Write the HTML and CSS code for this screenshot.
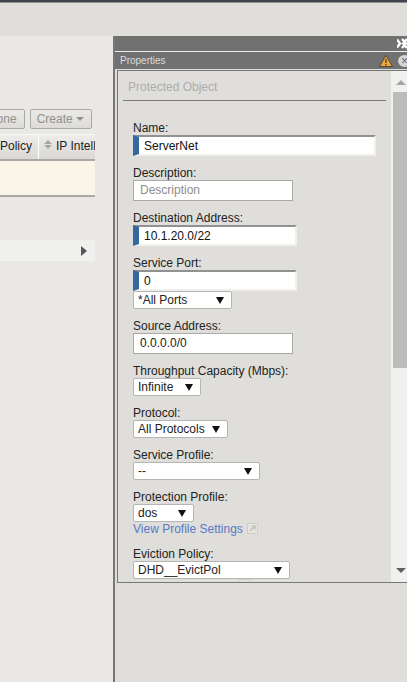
FILE: index.html
```html
<!DOCTYPE html>
<html lang="en">
<head>
  <meta charset="UTF-8">
  <title>Protected Object</title>
  <link rel="stylesheet" href="styles.css">
</head>
<body>
  <div class="topbar"></div>
  <div class="subbar"></div>

  <div class="workspace">
    <div class="list-area">
      <div class="toolbar">
        <span class="btn">Clone</span>
        <span class="btn btn-create">Create <i class="caret"></i></span>
      </div>
      <div class="table-head">
        <div class="th th-policy">Policy</div>
        <div class="th th-intel"><span class="sort"><i></i><i></i></span>IP Intelligence</div>
      </div>
      <div class="table-row"></div>
      <div class="expander"><i class="arrow"></i></div>
    </div>

    <div class="props">
      <div class="props-head">
        <div class="props-top">
          <svg class="close-all" width="10" height="11" viewBox="0 0 10 11"><path d="M0 1.5 L3 5.5 L0 9.5 M5 1 L9 5.5 L5 10 M10 1 L6 5.5 L10 10" fill="none" stroke="#fff" stroke-width="2.4"/></svg>
        </div>
        <div class="props-title">
          <span>Properties</span>
          <svg class="warn" width="14" height="12" viewBox="0 0 14 12"><path d="M7 .5 L13.5 11.5 L.5 11.5 Z" fill="#f2a838" stroke="#3a3a30" stroke-width=".8"/><path d="M7 4 V8 M7 9 V10.5" stroke="#333" stroke-width="1.2"/></svg>
          <span class="close-btn">×</span>
        </div>
      </div>

      <div class="props-box">
        <div class="form-scroll">
          <h2>Protected Object</h2>

          <div class="field">
            <label>Name:</label>
            <div class="req">ServerNet</div>
          </div>
          <div class="field">
            <label>Description:</label>
            <div class="text placeholder">Description</div>
          </div>
          <div class="field">
            <label>Destination Address:</label>
            <div class="req req-short">10.1.20.0/22</div>
          </div>
          <div class="field">
            <label>Service Port:</label>
            <div class="req req-short">0</div>
            <div class="select w-ports"><span>*All Ports</span><b></b></div>
          </div>
          <div class="field">
            <label>Source Address:</label>
            <div class="text">0.0.0.0/0</div>
          </div>
          <div class="field">
            <label>Throughput Capacity (Mbps):</label>
            <div class="select w-infinite"><span>Infinite</span><b></b></div>
          </div>
          <div class="field">
            <label>Protocol:</label>
            <div class="select w-proto"><span>All Protocols</span><b></b></div>
          </div>
          <div class="field">
            <label>Service Profile:</label>
            <div class="select w-service"><span>--</span><b></b></div>
          </div>
          <div class="field">
            <label>Protection Profile:</label>
            <div class="select w-dos"><span>dos</span><b></b></div>
            <a class="link">View Profile Settings <svg width="11" height="11" viewBox="0 0 11 11"><rect x=".5" y=".5" width="10" height="10" fill="#e6e5e1" stroke="#cfcec9"/><path d="M3 8 L7.5 3.5 M4.5 3 H8 V6.5" fill="none" stroke="#bdbcb8" stroke-width="1.2"/></svg></a>
          </div>
          <div class="field">
            <label>Eviction Policy:</label>
            <div class="select w-evict"><span>DHD__EvictPol</span><b></b></div>
          </div>
        </div>

        <div class="scrollbar">
          <i class="up"></i>
          <div class="thumb"></div>
          <i class="down"></i>
        </div>
        <div class="grip"></div>
      </div>
    </div>
  </div>
</body>
</html>
```

FILE: styles.css
```css
html, body {
  margin: 0;
  padding: 0;
}

body {
  width: 407px;
  height: 682px;
  overflow: hidden;
  background: #e9e8e4;
  font-family: "Liberation Sans", Arial, sans-serif;
  font-size: 12px;
  color: #222;
}

.topbar {
  height: 3px;
  background: #3f444c;
  border-bottom: 1px solid #8e8e8c;
  box-sizing: border-box;
}

.subbar {
  height: 33px;
  background: #dfdedb;
}

.workspace {
  display: flex;
  height: 646px;
}

/* left list */
.list-area {
  width: 113px;
  flex: none;
  overflow: hidden;
}

.toolbar {
  display: flex;
  justify-content: flex-end;
  gap: 5px;
  width: 92px;
  padding-top: 73px;
  height: 20px;
}

.btn {
  display: block;
  flex: none;
  height: 20px;
  box-sizing: border-box;
  line-height: 18px;
  padding: 0 7px;
  border: 1px solid #a9a9a7;
  border-radius: 2px;
  background: linear-gradient(#ebeae7, #dcdbd8);
  color: #919190;
  white-space: nowrap;
}

.btn-create {
  padding: 0 7px 0 6px;
}

.caret {
  display: inline-block;
  border: 4px solid transparent;
  border-top: 4px solid #919190;
  border-bottom: 0;
  vertical-align: 2px;
}

.table-head {
  display: flex;
  width: 95px;
  height: 27px;
  margin-top: 5px;
  background: linear-gradient(#eeedea, #d9d8d5);
  border-top: 1px solid #f8f8f7;
  border-bottom: 2px solid #a8a8a6;
  box-sizing: border-box;
  line-height: 23px;
  overflow: hidden;
}

.th {
  flex: none;
  white-space: nowrap;
}

.th-policy {
  width: 39px;
  text-align: right;
  border-right: 1px solid #fff;
  padding-right: 6px;
  box-sizing: border-box;
}

.th-intel {
  padding-left: 5px;
}

.sort {
  display: inline-block;
  width: 8px;
  margin-right: 4px;
  vertical-align: 1px;
}

.sort i {
  display: block;
  width: 0;
  height: 0;
  border: 4px solid transparent;
}

.sort i:first-child {
  border-top: 0;
  border-bottom: 4px solid #a5a5a3;
  margin-bottom: 1px;
}

.sort i:last-child {
  border-bottom: 0;
  border-top: 4px solid #a5a5a3;
}

.table-row {
  width: 95px;
  height: 36px;
  background: #f9f6e9;
  border-bottom: 2px solid #a9a9a8;
  box-sizing: border-box;
}

.expander {
  display: flex;
  justify-content: flex-end;
  align-items: center;
  width: 95px;
  height: 21px;
  margin-top: 43px;
  background: #f0f0ef;
  box-sizing: border-box;
  padding-right: 8px;
}

.arrow {
  width: 0;
  height: 0;
  border-left: 6px solid #555;
  border-top: 5px solid transparent;
  border-bottom: 5px solid transparent;
}

/* properties panel */
.props {
  width: 294px;
  flex: none;
  height: 646px;
  background: #dfdedb;
  border-left: 2px solid #777;
  box-sizing: border-box;
}

.props-head {
  height: 33px;
  background: #717171;
}

.props-top {
  height: 15px;
  border-bottom: 1px solid #eeeeec;
  position: relative;
}

.close-all {
  position: absolute;
  right: 0;
  top: 2px;
}

.props-title {
  height: 17px;
  display: flex;
  align-items: center;
  color: #dcdcdc;
  font-size: 10px;
  padding-left: 5px;
}

.warn {
  margin-left: auto;
  margin-right: 5px;
}

.close-btn {
  width: 13px;
  height: 12px;
  flex: none;
  border-radius: 50%;
  background: #d5d5d8;
  color: #667;
  font-size: 12px;
  line-height: 12px;
  text-align: center;
  margin-right: -4px;
}

.props-box {
  position: relative;
  display: flex;
  height: 513px;
  margin: 1px 0 0 2px;
  border: 1px solid #777;
  border-right: none;
  box-sizing: border-box;
  overflow: hidden;
}

.form-scroll {
  flex: 1;
  min-width: 0;
  padding: 8px 5px 0 5px;
}

h2 {
  margin: 0 0 19px;
  padding: 0 0 5px 5px;
  font-size: 12px;
  font-weight: normal;
  line-height: 16px;
  color: #adadab;
  border-bottom: 1px solid #7b7b7b;
}

.field {
  margin: 0 0 9px 10px;
}

.field label {
  display: block;
  line-height: 14px;
  padding-top: 1px;
}

.req {
  width: 243px;
  height: 21px;
  box-sizing: border-box;
  background: #fff;
  border: 2px solid #f0efec;
  border-top: 2px solid #919191;
  border-left: 6px solid #35689e;
  line-height: 19px;
  padding-left: 5px;
  color: #111;
}

.req-short {
  width: 164px;
}

.text {
  width: 160px;
  height: 21px;
  box-sizing: border-box;
  background: #fff;
  border: 1px solid #a9a9a9;
  line-height: 19px;
  padding-left: 6px;
}

.placeholder {
  color: #8d8d8d;
}

.select {
  display: flex;
  justify-content: space-between;
  align-items: center;
  height: 18px;
  box-sizing: border-box;
  background: #fff;
  border: 1px solid #b5b5b3;
  border-radius: 2px;
  padding: 0 7px 0 4px;
  white-space: nowrap;
}

.select b {
  width: 0;
  height: 0;
  border: 4px solid transparent;
  border-top: 7px solid #111;
  border-bottom: 0;
}

.w-ports { width: 99px; }
.w-infinite { width: 68px; }
.w-proto { width: 95px; }
.w-service { width: 127px; }
.w-dos { width: 61px; }
.w-evict { width: 157px; }

.link {
  display: block;
  line-height: 15px;
  color: #5b78c8;
}

.link svg {
  vertical-align: -1px;
  margin-left: 1px;
}

.scrollbar {
  width: 16px;
  flex: none;
  background: #f0f0ef;
  display: flex;
  flex-direction: column;
  align-items: flex-end;
}

.up {
  width: 0;
  height: 0;
  margin: 9px 1px 7px 0;
  border: 5px solid transparent;
  border-top: 0;
  border-bottom: 5px solid #a4a4a4;
}

.thumb {
  width: 14px;
  height: 276px;
  background: #bcbcbc;
}

.down {
  width: 0;
  height: 0;
  margin: auto 1px 9px 0;
  border: 5px solid transparent;
  border-bottom: 0;
  border-top: 5px solid #606060;
}

/* little handle under the form */
.grip {
  position: absolute;
  left: 121px;
  bottom: 0;
  width: 10px;
  height: 2px;
  border: 1px solid #cfcec9;
  border-bottom: 0;
  border-radius: 2px 2px 0 0;
}
```
